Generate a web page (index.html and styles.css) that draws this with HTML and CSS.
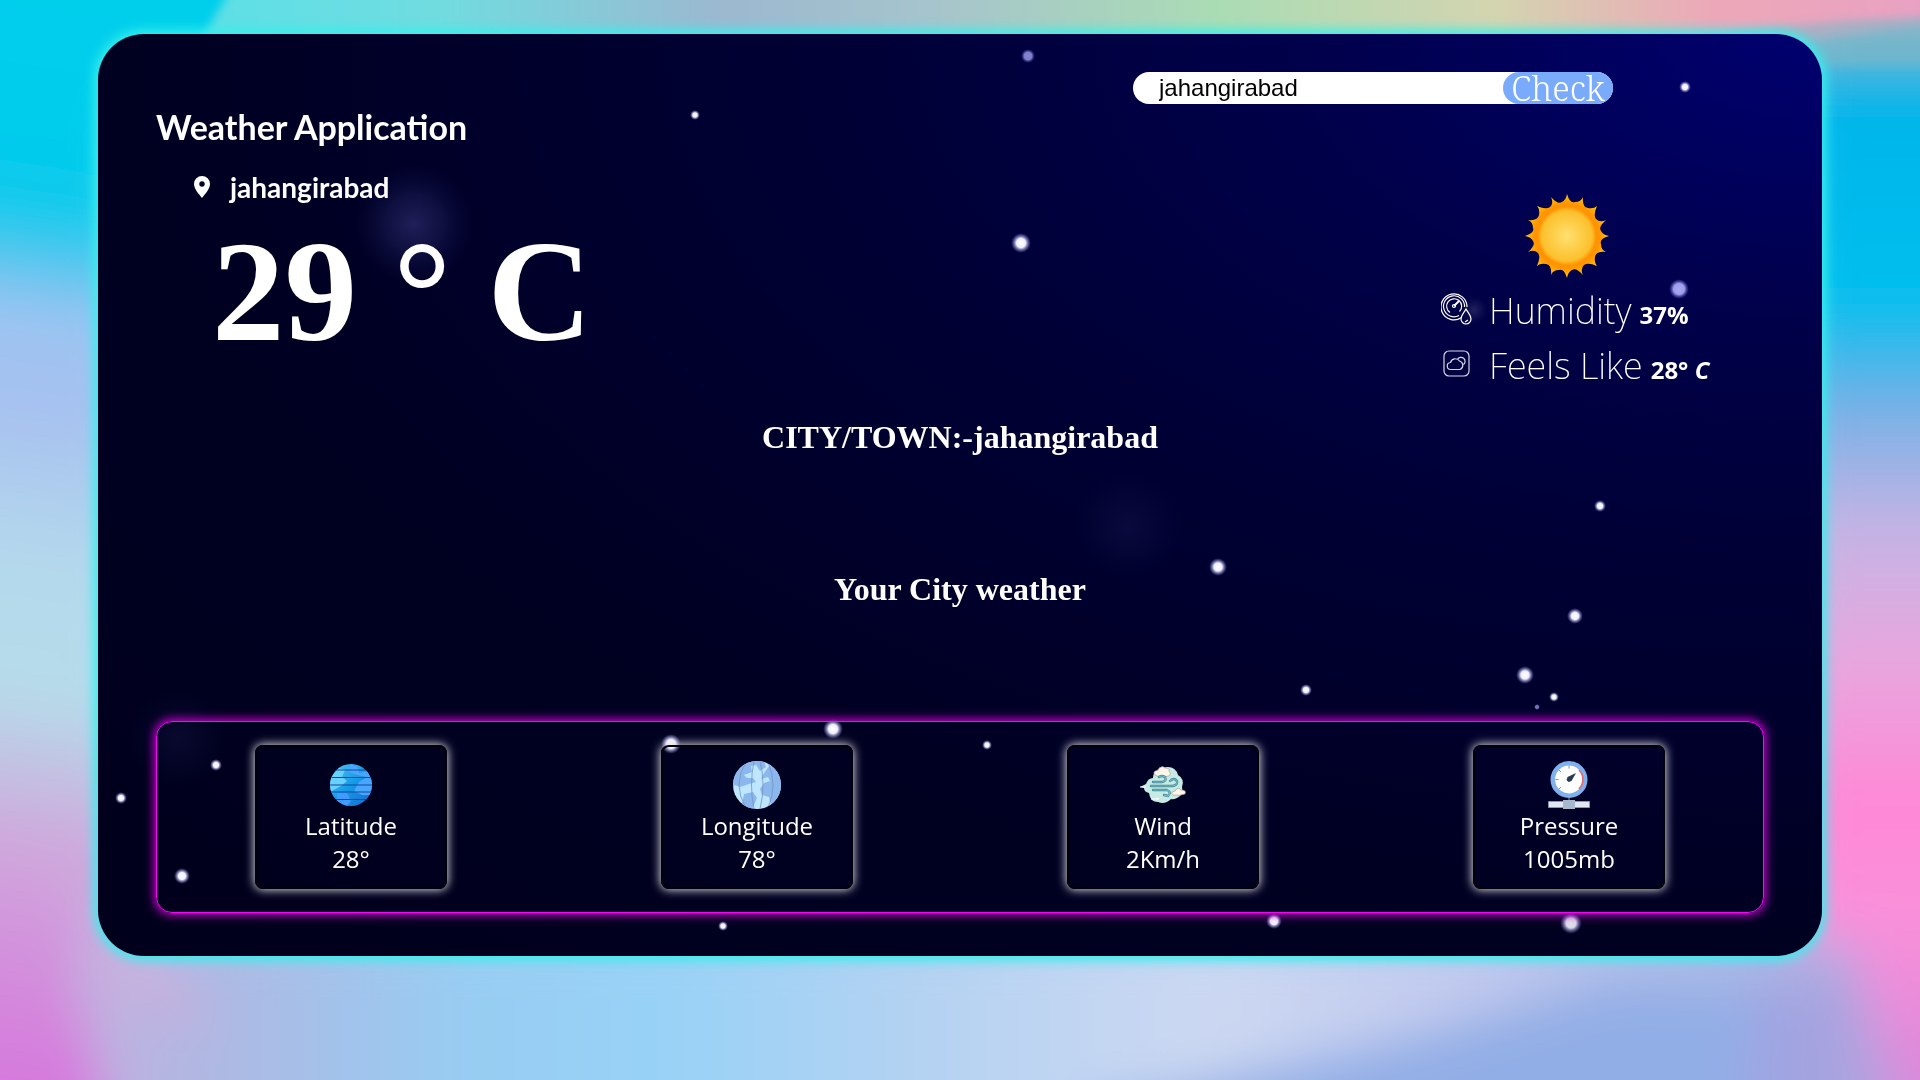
FILE: index.html
```html
<!DOCTYPE html>
<html lang="en">
<head>
<meta charset="utf-8">
<title>Weather Application</title>
<meta name="viewport" content="width=device-width, initial-scale=1">
<link rel="stylesheet" href="styles.css">
</head>
<body>
<svg class="backdrop" viewBox="0 0 1920 1080" preserveAspectRatio="none" aria-hidden="true">
  <defs>
    <filter id="soft" x="-20%" y="-20%" width="140%" height="140%"><feGaussianBlur stdDeviation="24"/></filter>
    <filter id="edge" x="-20%" y="-50%" width="140%" height="200%"><feGaussianBlur stdDeviation="5"/></filter>
    <linearGradient id="left" gradientUnits="userSpaceOnUse" x1="0" y1="0" x2="-160" y2="1080">
      <stop offset="0" stop-color="#00cfec"/><stop offset=".18" stop-color="#08caec"/><stop offset=".28" stop-color="#9cc4f2"/><stop offset=".36" stop-color="#a6c0f0"/><stop offset=".5" stop-color="#b4d8ec"/><stop offset=".62" stop-color="#b6dcea"/><stop offset=".76" stop-color="#cfa8dc"/><stop offset=".9" stop-color="#d488dc"/><stop offset="1" stop-color="#d676de"/>
    </linearGradient>
    <linearGradient id="right" x1="0" y1="0" x2="0" y2="1">
      <stop offset="0" stop-color="#d0a0bc"/><stop offset=".05" stop-color="#78b8cc"/><stop offset=".1" stop-color="#00b4ea"/><stop offset=".28" stop-color="#00bfee"/><stop offset=".38" stop-color="#7cb0e6"/><stop offset=".48" stop-color="#c4b4e4"/><stop offset=".6" stop-color="#e8a6de"/><stop offset=".72" stop-color="#ff88d6"/><stop offset=".82" stop-color="#fa90da"/><stop offset="1" stop-color="#d486da"/>
    </linearGradient>
    <linearGradient id="bottom" x1="0" y1="0" x2="1" y2="0">
      <stop offset="0" stop-color="#d080dc"/><stop offset=".07" stop-color="#c4b0e0"/><stop offset=".14" stop-color="#aeb8e2"/><stop offset=".26" stop-color="#98ccf2"/><stop offset=".36" stop-color="#98d2f6"/><stop offset=".48" stop-color="#b4d2f2"/><stop offset=".62" stop-color="#ccd8f2"/><stop offset=".75" stop-color="#c0c8ee"/><stop offset=".88" stop-color="#a8b4e4"/><stop offset="1" stop-color="#c098dc"/>
    </linearGradient>
    <linearGradient id="top" x1="0" y1="0" x2="1" y2="0">
      <stop offset="0" stop-color="#5ce0e6"/><stop offset=".14" stop-color="#70dce0"/><stop offset=".3" stop-color="#9cb8d0"/><stop offset=".42" stop-color="#a6c4cc"/><stop offset=".58" stop-color="#aadcb4"/><stop offset=".74" stop-color="#d4d4b0"/><stop offset=".86" stop-color="#eca8b8"/><stop offset="1" stop-color="#e8a0c4"/>
    </linearGradient>
  </defs>
  <g filter="url(#soft)">
    <path fill="url(#bottom)" d="M-80 940H2000V1160H-80Z"/>
    <path fill="#92aee6" d="M1080 1110 1400 1040 1620 980 1820 1000 1820 1160H1080Z"/>
    <path fill="url(#left)" d="M-80-80H320L240 90 125 120V900L70 960 120 1160H-80Z"/>
    <path fill="#c8b0de" d="M60 860 130 920 220 1030 120 1000Z"/>
    <path fill="url(#right)" d="M1795-20H2000V1120H1900L1850 940H1795Z"/>
    <path fill="#a6a0de" opacity=".7" d="M1760 980 1850 990 1880 1120H1740Z"/>
  </g>
  <path filter="url(#edge)" fill="url(#top)" d="M236-20H1960V20Q1800 40 1700 60H190Z"/>
  <path filter="url(#edge)" fill="#7ab8c8" opacity=".6" d="M1640 50Q1780 20 1940 16V66H1640Z"/>
</svg>

<main class="card">
  <svg class="sky" viewBox="0 0 1724 922" preserveAspectRatio="none" aria-hidden="true">
    <defs>
      <radialGradient id="star"><stop offset="0" stop-color="#fff"/><stop offset=".45" stop-color="#f0f0ff"/><stop offset="1" stop-color="#8080e0" stop-opacity="0"/></radialGradient>
      <radialGradient id="dimstar"><stop offset="0" stop-color="#a8a8f4"/><stop offset=".55" stop-color="#9c9cec"/><stop offset="1" stop-color="#5050c0" stop-opacity="0"/></radialGradient>
      <radialGradient id="haze"><stop offset="0" stop-color="#2e2e70" stop-opacity=".7"/><stop offset=".5" stop-color="#20205c" stop-opacity=".45"/><stop offset="1" stop-color="#10104a" stop-opacity="0"/></radialGradient>
    </defs>
    <g fill="url(#haze)">
      <circle cx="316" cy="190" r="60"/>
      <circle cx="1376" cy="276" r="14"/>
      <circle cx="1030" cy="492" r="56" opacity=".3"/>
      <circle cx="80" cy="704" r="50" opacity=".3"/>
    </g>
    <g fill="url(#star)">
      <circle cx="597" cy="81" r="5"/>
      <circle cx="1587" cy="53" r="6"/>
      <circle cx="923" cy="209" r="10"/>
      <circle cx="1502" cy="472" r="6"/>
      <circle cx="1120" cy="533" r="9"/>
      <circle cx="1477" cy="582" r="8"/>
      <circle cx="1427" cy="641" r="9"/>
      <circle cx="1456" cy="663" r="5"/>
      <circle cx="1208" cy="656" r="6"/>
      <circle cx="735" cy="695" r="10"/>
      <circle cx="573" cy="710" r="10"/>
      <circle cx="889" cy="711" r="5"/>
      <circle cx="118" cy="731" r="6"/>
      <circle cx="23" cy="764" r="6"/>
      <circle cx="84" cy="842" r="8"/>
      <circle cx="625" cy="892" r="5"/>
      <circle cx="1176" cy="887" r="8"/>
      <circle cx="1473" cy="889" r="11" opacity=".9"/>
    </g>
    <g fill="url(#dimstar)">
      <circle cx="930" cy="22" r="7" opacity=".8"/>
      <circle cx="1581" cy="255" r="10"/>
      <circle cx="1439" cy="673" r="3" opacity=".7"/>
    </g>
  </svg>

  <div class="top">
    <section class="place">
      <h1 class="brand">Weather Application</h1>
      <p class="location">
        <svg class="pin" viewBox="0 0 16 22" aria-hidden="true"><path fill="#fff" fill-rule="evenodd" d="M8 0a8 8 0 0 0-8 8c0 5 5 10 8 14 3-4 8-9 8-14a8 8 0 0 0-8-8Zm0 5.300a2.700 2.700 0 1 1 0 5.400 2.700 2.700 0 0 1 0-5.400Z"/></svg>
        <span>jahangirabad</span>
      </p>
      <p class="temperature">29 ° C</p>
    </section>

    <section class="side">
      <form class="search">
        <input class="search-box" type="text" value="jahangirabad" aria-label="City">
        <button class="search-button" type="button">Check</button>
      </form>
      <div class="conditions">
        <svg class="sun" viewBox="-42 -42 84 84" aria-hidden="true">
          <defs><radialGradient id="sunfill" gradientUnits="userSpaceOnUse" cx="0" cy="0" r="42"><stop offset="0" stop-color="#ffe070"/><stop offset=".6" stop-color="#fcc02c"/><stop offset=".7" stop-color="#ff9202"/><stop offset=".77" stop-color="#ff9500"/><stop offset="1" stop-color="#ffc70a"/></radialGradient></defs>
          <path fill="url(#sunfill)" d="M0-42Q3-32 8-34 14-34 16-39 15-29 21-28 27-27 30-30 26-21 29-17 33-13 39-16 31-9 34-5 36-1 42 0 32 3 34 8 34 14 39 16 29 15 28 21 27 27 30 30 21 26 17 29 13 33 16 39 9 31 5 34 1 36 0 42-3 32-8 34-14 34-16 39-15 29-21 28-27 27-30 30-26 21-29 17-33 13-39 16-31 9-34 5-36 1-42 0-32-3-34-8-34-14-39-16-29-15-28-21-27-27-30-30-21-26-17-29-13-33-16-39-9-31-5-34-1-36 0-42Z"/>
        </svg>
        <p class="condition">
          <svg class="condition-icon" viewBox="0 0 32 32" fill="none" stroke="#fff" stroke-width="1.200" aria-hidden="true"><path d="M20.500 24.500A13 13 0 1 1 26 14"/><path d="M18 22.500A10.500 10.500 0 1 1 23.500 14"/><path d="M9 19.500a7.500 7.500 0 1 1 9.500-1"/><path d="m13 13 5-5" stroke-width="2"/><circle cx="13" cy="13" r="1.500"/><path d="M25 16c-2 4-5 6-5 10a5 5 0 0 0 10 0c0-4-3-6-5-10Zm2 11-3 2"/></svg>
          <span class="condition-name">Humidity</span> <span class="condition-value">37%</span>
        </p>
        <p class="condition">
          <svg class="condition-icon" viewBox="0 0 32 32" fill="none" stroke="#d8d8e8" stroke-width="1.200" aria-hidden="true"><rect x="3" y="3" width="25" height="25" rx="5"/><path d="M10 21.500a3.500 3.500 0 0 1-.500-7 5 5 0 0 1 9-1.500 4.500 4.500 0 0 1 .500 8.500Zm6.500-10a4 4 0 1 1 6 5"/></svg>
          <span class="condition-name">Feels Like</span> <span class="condition-value">28° <i>C</i></span>
        </p>
      </div>
    </section>
  </div>

  <h2 class="headline">CITY/TOWN:-jahangirabad</h2>
  <h2 class="headline">Your City weather</h2>

  <section class="metrics">
    <article class="metric">
      <svg class="metric-icon" viewBox="0 0 48 48" aria-hidden="true">
        <defs><linearGradient id="ocean" x1="0" y1="0" x2="1" y2="1"><stop stop-color="#62c9f8"/><stop offset=".5" stop-color="#149be8"/><stop offset="1" stop-color="#1760cc"/></linearGradient><clipPath id="disc"><circle cx="24" cy="24" r="21"/></clipPath></defs>
        <g clip-path="url(#disc)"><path fill="url(#ocean)" d="M0 0h48v48H0z"/><path fill="#69d1ff" d="M3 17 12 7l6 2-3 7 5 4-6 5-11 6Z"/><path fill="#49a6ff" d="m24 2 7 5 1 5 9-2 6 14-3 10-9 0-8-4 5-9 8-5-10-2-8-3Z"/><path fill="#409aff" d="m10 32 10 0 4 8-6 8-8-7Z"/><path stroke="#16469b" stroke-width="1.200" d="M0 9h48M0 16.500h48M0 24h48M0 31h48M0 38.500h48"/></g>
      </svg>
      <span>Latitude</span><span>28°</span>
    </article>
    <article class="metric">
      <svg class="metric-icon" viewBox="0 0 48 48" aria-hidden="true">
        <clipPath id="world"><circle cx="24" cy="24" r="24"/></clipPath>
        <g clip-path="url(#world)"><path fill="#bfe6ff" d="M0 0h48v48H0z"/><path fill="#8cb6ee" d="M0 26V7L14 0h17l2 6-6 4-4-6-5 1 1 6-8 3 3 3 6 0 3 4-7 2-9 3-5-2ZM37 4l11 8v26l-10 7-2-9-7-2-2-6 4-6 6-2-2-4-7 2 3-6ZM11 33l9-2 4 6-5 11H8Z"/><path fill="none" stroke="#7294bb" stroke-width=".8" d="M13 1Q-1 24 13 47M21 0q-5 24 0 48M27 0q6 24 0 48M35 1q10 23 0 46"/></g>
      </svg>
      <span>Longitude</span><span>78°</span>
    </article>
    <article class="metric">
      <svg class="metric-icon" viewBox="0 0 48 48" aria-hidden="true">
        <path fill="#c6ebe4" d="m1 26 6-3q2-6 7-6 0-7 8-10 14-4 17 7 7 4 4 12 2 8-5 11-4 2-6 1-6 6-13 3-8 0-9-9-5-1-5-5Z"/>
        <path fill="#fff6e9" stroke="#9b8f90" stroke-width=".6" d="M18 15q-5-2-2-5 4 0 4-3 4-3 6 0 5 0 4 3 3 3 0 5-6 2-12 0ZM34 34q-3-3 2-4 3-5 6-1 6 0 4 4-5 2-12 1Z"/>
        <g fill="none" stroke-linecap="round"><path stroke="#4c7f90" stroke-width="2.400" d="M14 21h9q5-1 3-5-3-2-6 0M12 25h22q5-1 4-5-3-4-7 0M14 29h14q5 2 1 6l-4-1"/><path stroke="#64c5d0" stroke-width="1.200" d="M14 21h9q5-1 3-5-3-2-6 0M12 25h22q5-1 4-5-3-4-7 0M14 29h14q5 2 1 6l-4-1"/></g>
        <path fill="none" stroke="#fff" stroke-width="1" d="M1 26h6M12 38h8l-3-1"/>
      </svg>
      <span>Wind</span><span>2Km/h</span>
    </article>
    <article class="metric">
      <svg class="metric-icon" viewBox="0 0 48 48" aria-hidden="true">
        <path stroke="#7894b8" d="M24 36v4"/><circle cx="24" cy="18.500" r="16.200" fill="#fff" stroke="#7fb1ef" stroke-width="4.600"/>
        <path fill="none" stroke="#df6b6b" stroke-width="1.600" d="M34 9a13.500 13.500 0 0 1 0 19"/>
        <path stroke="#6d7b8c" stroke-width=".8" d="M24 4.500v3M14 9l2 2M10.500 18.500h3M14 28l2-2"/><path fill="#293b4e" d="m31 12-4.500 8-3 1-2-2 1-3Z"/>
        <path fill="#dfe9f3" stroke="#8ea1b4" stroke-width=".8" d="M3.500 40.500h41v6h-41z"/><path fill="#a5b8cc" d="M18 39h12v9H18z"/>
      </svg>
      <span>Pressure</span><span>1005mb</span>
    </article>
  </section>
</main>
</body>
</html>
```
FILE: styles.css
```css
* {
  box-sizing: border-box;
}

body {
  margin: 0;
  min-height: 100vh;
  padding: 34px 98px 0;
  color: #fff;
  font-family: "Liberation Serif", "Times New Roman", serif;
  background: #a3cdf0;
}

h1, h2, p {
  margin: 0;
}

.backdrop {
  position: fixed;
  inset: 0;
  z-index: -1;
  width: 100%;
  height: 100%;
}

.card {
  position: relative;
  padding: 38px 58px 43px;
  border-radius: 46px;
  overflow: hidden;
  background: radial-gradient(ellipse at 100% 0, #000070 0, #00004a 22%, #000034 42%, #000022 68%, #00001c 100%);
  box-shadow: 0 0 12px 4px #35f0ec;
}

.sky {
  position: absolute;
  inset: 0;
  width: 100%;
  height: 100%;
}

.top,
.headline,
.metrics {
  position: relative;
}

.top {
  display: flex;
  justify-content: space-between;
  margin-bottom: 22px;
}

.place {
  padding-top: 31px;
}

.brand {
  font: 700 34px/48px "Lato", cursive;
}

.location {
  display: flex;
  align-items: center;
  gap: 20px;
  height: 48px;
  margin: 12px 0 0 38px;
  font: 700 28px/48px "Lato", cursive;
}

.pin {
  width: 16px;
  height: 22px;
}

.temperature {
  margin-left: 56px;
  font-size: 145px;
  font-weight: 700;
  line-height: 160px;
}

.side {
  width: 631px;
}

.search {
  display: flex;
  width: 480px;
  height: 32px;
  border-radius: 16px;
  background: #fff;
}

.search-box {
  flex: 1;
  min-width: 0;
  padding: 0 26px;
  border: 0;
  outline: 0;
  background: none;
  color: #000;
  font: 24px/32px "Liberation Sans", Arial, sans-serif;
}

.search-button {
  width: 110px;
  padding: 0;
  border: 0;
  border-radius: 16px;
  background: #7aaafa;
  color: #fff;
  font: 300 34px/30px "Noto Serif", "Liberation Serif", serif;
}

.conditions {
  display: flex;
  flex-direction: column;
  width: 280px;
  margin: 90px 0 0 308px;
}

.sun {
  width: 84px;
  height: 84px;
  margin: 0 0 7px 84px;
}

.condition {
  display: flex;
  align-items: baseline;
  height: 55px;
  font: 200 36px/52px "Noto Sans", sans-serif;
  white-space: nowrap;
}

.condition-icon {
  align-self: flex-start;
  flex: none;
  width: 32px;
  height: 32px;
  margin: 8px 16px 0 0;
}

.condition-name {
  margin-right: 8px;
}

.condition-value {
  font: 700 24px/52px "Open Sans", sans-serif;
}

.headline {
  margin-bottom: 112px;
  font-size: 32px;
  line-height: 40px;
  text-align: center;
}

.metrics {
  display: flex;
  justify-content: space-between;
  padding: 23px 98px;
  border: 1px solid #ff00ff;
  border-radius: 16px;
  box-shadow: 0 0 10px 2px #c800d0;
}

.metric {
  display: flex;
  flex-direction: column;
  align-items: center;
  width: 192px;
  height: 144px;
  padding-top: 14px;
  border: 2px solid #000008;
  border-radius: 8px;
  box-shadow: 0 0 10px 1px #d8d8e0;
  font: 500 24px/33px "Open Sans", sans-serif;
}

.metric-icon {
  width: 48px;
  height: 48px;
}
```
